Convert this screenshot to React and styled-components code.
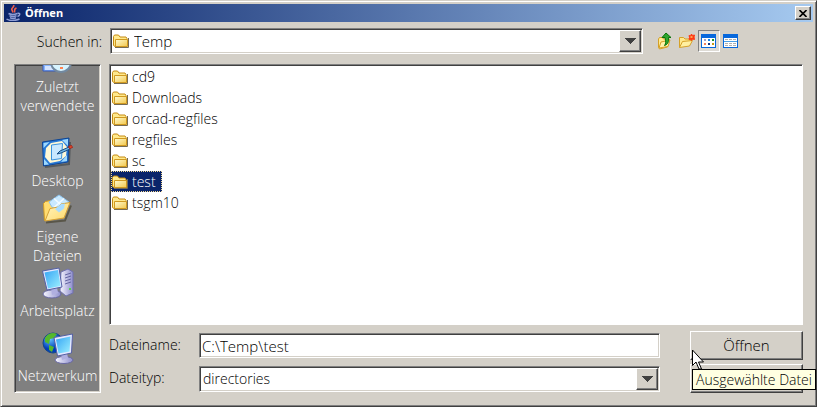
import React, {useState} from 'react';
import styled, {createGlobalStyle, css} from 'styled-components';

const face = '#d4d0c8';
const shadow = '#808080';
const darkShadow = '#404040';
const navy = '#0a246a';

const GlobalStyle = createGlobalStyle`
  * {
    box-sizing: border-box;
  }

  body {
    margin: 0;
    overflow: hidden;
    background: ${face};
  }

  body, button, input, select {
    color: #000;
    font-family: "Open Sans", "Noto Sans", sans-serif;
    font-size: 14px;
    font-weight: 300;
  }
`;

const sunken = css`
  border: 1px solid;
  border-color: ${shadow} #fff #fff ${shadow};
  box-shadow: inset 1px 1px ${darkShadow}, inset -1px -1px ${face};
`;

const raised = css`
  border: 1px solid;
  border-color: #fff ${darkShadow} ${darkShadow} #fff;
  box-shadow: inset -1px -1px ${shadow};
`;

const Dialog = styled.main`
  display: flex;
  flex-direction: column;
  min-height: 100vh;
  padding: 3px;
  overflow: hidden;
  background: ${face};
  border: 1px solid;
  border-color: ${face} ${darkShadow} ${darkShadow} ${face};
  box-shadow: inset 1px 1px #fff, inset -1px -1px ${shadow};
`;

const TitleBar = styled.header`
  display: flex;
  align-items: center;
  gap: 3px;
  height: 18px;
  padding: 0 2px;
  background: linear-gradient(to right, ${navy}, #a6caf0);
`;

const Title = styled.h1`
  flex: 1;
  margin: 0;
  color: #fff;
  font-family: "Noto Sans", sans-serif;
  font-size: 11px;
  font-weight: 700;
  line-height: 18px;
`;

const CloseButton = styled.button`
  ${raised}
  display: grid;
  place-items: center;
  width: 16px;
  height: 14px;
  padding: 0;
  background: ${face};
`;

const Toolbar = styled.div`
  display: flex;
  align-items: center;
  padding: 6px 71px 0 10px;
`;

const LookInLabel = styled.label`
  width: 96px;
  padding-right: 8px;
  text-align: right;
`;

const ToolButtons = styled.div`
  display: flex;
  margin-left: 11px;
`;

const ToolButton = styled.button`
  display: grid;
  place-items: center;
  width: 22px;
  height: 22px;
  padding: 0;
  background: ${({$pressed}) => ($pressed ? '#dedbd5' : 'transparent')};
  border: 1px solid;
  border-color: ${({$pressed}) => ($pressed ? `${shadow} #fff #fff ${shadow}` : 'transparent')};
`;

const ComboFrame = styled.div`
  ${sunken}
  position: relative;
  flex: 1;
  display: flex;
  align-items: center;
  height: 26px;
  padding: 2px;
  background: #fff;
`;

const ComboSelect = styled.select`
  flex: 1;
  min-width: 0;
  height: 20px;
  padding: 0 24px 0 ${({$withIcon}) => ($withIcon ? '5px' : '1px')};
  font-size: ${({$withIcon}) => ($withIcon ? '15px' : '14px')};
  line-height: 20px;
  background: transparent;
  border: 0;
  outline: 0;
  appearance: none;
`;

const ComboArrow = styled.span`
  ${raised}
  position: absolute;
  top: 1px;
  right: 1px;
  bottom: 1px;
  display: grid;
  place-items: center;
  width: 22px;
  background: ${face};
  pointer-events: none;
`;

const Body = styled.div`
  flex: 1;
  display: flex;
  gap: 8px;
  padding: 10px;
`;

const Places = styled.nav`
  ${sunken}
  display: flex;
  flex-direction: column;
  justify-content: flex-end;
  width: 87px;
  padding: 1px;
  overflow: hidden;
  background: ${shadow};
`;

const Place = styled.button`
  display: flex;
  flex-direction: column;
  align-items: center;
  justify-content: ${({$scrolled}) => ($scrolled ? 'flex-end' : 'center')};
  height: 65px;
  padding: 0 0 ${({$scrolled}) => ($scrolled ? '16px' : '0')};
  color: #fff;
  line-height: 19px;
  white-space: pre;
  background: none;
  border: 0;

  svg {
    flex: none;
    margin-bottom: 2px;
  }
`;

const Main = styled.div`
  flex: 1;
  display: flex;
  flex-direction: column;
  gap: 6px;
  min-width: 0;
`;

const FileList = styled.ul`
  flex: 1;
  margin: 0;
  padding: 1px;
  list-style: none;
  background: #fff;
  border: 1px solid;
  border-color: ${shadow} #fff #fff ${shadow};
  box-shadow: inset 1px 1px ${darkShadow};
`;

const FileItem = styled.li`
  display: flex;
  align-items: center;
  gap: 4px;
  width: fit-content;
  height: 21px;
  padding: 0 5px 0 0;
  color: ${({$selected}) => ($selected ? '#fff' : '#000')};
  line-height: 19px;
  background: ${({$selected}) => ($selected ? navy : 'transparent')};
  border: 1px dotted ${({$selected}) => ($selected ? '#f5db95' : 'transparent')};
  cursor: default;
`;

const Footer = styled.div`
  display: grid;
  grid-template-columns: 90px 1fr 113px;
  grid-template-rows: 29px 29px;
  row-gap: 4px;
  align-items: center;
`;

const FieldLabel = styled.label`
  padding-bottom: 2px;
`;

const FieldCell = styled.div`
  display: flex;
  margin-right: 30px;
`;

const FileNameInput = styled.input`
  ${sunken}
  width: 100%;
  min-width: 0;
  height: 25px;
  padding: 0 2px;
  font-size: 15px;
  background: #fff;
  border-radius: 0;
  outline: 0;
`;

const ActionCell = styled.div`
  position: relative;
`;

const ActionButton = styled.button`
  ${raised}
  width: 100%;
  height: 29px;
  padding: 0 0 2px;
  font-size: 15px;
  background: ${face};
`;

const Pointer = styled.svg`
  position: absolute;
  top: 18px;
  left: 2px;
  z-index: 1;
  pointer-events: none;
`;

const Tooltip = styled.div`
  position: absolute;
  top: 5px;
  left: 2px;
  z-index: 2;
  padding: 0 3px;
  line-height: 19px;
  white-space: nowrap;
  background: #ffffe1;
  border: 1px solid #000;
`;

const JavaIcon = () => (
  <svg
    height="16"
    viewBox="0 0 16 16"
    width="16"
  >
    <g
      fill="none"
      stroke="#f0604c"
      strokeWidth="1.6"
    >
      <path d="M7.500 0c1.500 2-3 3-1.500 5l1 2.500" />
      <path d="M10.500 3c-3 1-1.500 2.500-2 4.500" />
    </g>
    <g
      fill="none"
      stroke="#8f9ed6"
      strokeWidth="1.5"
    >
      <path d="M2.500 8.500c2 1 6 1 9 0M3.500 10.800c2 .8 5 .8 7 0M4 12.800c2 .8 4 .8 6 0" />
      <path d="M11.500 8.500c3-1 3 2 0 3M.5 14c3 2 9 2 13 0" />
    </g>
  </svg>
);

const FolderIcon = () => (
  <svg
    height="16"
    viewBox="0 0 16 16"
    width="16"
  >
    <defs>
      <linearGradient
        id="folder"
        x1="0"
        x2="1"
        y1="0"
        y2="1"
      >
        <stop
          offset="0"
          stopColor="#fffbd0"
        />
        <stop
          offset="1"
          stopColor="#f3c84d"
        />
      </linearGradient>
    </defs>
    <path
      d="M2 14.500h13.500V5"
      fill="none"
      stroke="#756b55"
    />
    <path
      d="M.5 12.500v-9l1-1.500h4l1.500 2h6l1 1.500v8h-12z"
      fill="#ffe98c"
      stroke="#c58b12"
    />
    <path
      d="M2.500 6.500h12v7h-12z"
      fill="url(#folder)"
      stroke="#d19a20"
    />
  </svg>
);

const UpIcon = () => (
  <svg
    height="18"
    viewBox="0 0 16 18"
    width="16"
  >
    <path
      d="M1.500 15.500V7l1-1.500h3l1 1.500h5l1 1-2 7-8 2z"
      fill="#ffeb91"
      stroke="#d5a128"
    />
    <path
      d="M2 16l2-6 9-2-2 6.500z"
      fill="#fff2a8"
      stroke="#d5a128"
    />
    <path
      d="M9 1l5 4.500h-2.500c.5 4-.5 7-4 8 1.500-2 1.500-4 .5-8H5z"
      fill="#2da52d"
      stroke="#087208"
    />
  </svg>
);

const NewFolderIcon = () => (
  <svg
    height="18"
    viewBox="0 0 16 18"
    width="16"
  >
    <path
      d="M.5 15.500V5.500h4l1.500 1.500h5.500v3"
      fill="#ffe98c"
      stroke="#d5a128"
    />
    <path
      d="M.5 15.500l3-6 10-1-3 5.500z"
      fill="#fff0a0"
      stroke="#d5a128"
    />
    <path
      d="M12.500 2l1 1.500 2-.5-.5 2 .5 2.500-2-.5-1 1.500-1-1.500-1.500.5.500-2-.5-2 1.500.5z"
      fill="#ff3a14"
      stroke="#ff3a14"
    />
    <path
      d="M11.500 4h2v2h-2z"
      fill="#ffa04c"
    />
  </svg>
);

const WindowGlyph = ({children}) => (
  <svg
    height="16"
    shapeRendering="crispEdges"
    viewBox="0 0 16 16"
    width="16"
  >
    <path
      d="M0 1h15v14H0z"
      fill="#0868dc"
    />
    <path
      d="M1 5h13v9H1z"
      fill="#fff"
    />
    {children}
  </svg>
);

const ListIcon = () => (
  <WindowGlyph>
    <path
      d="M3 6h2v2H3z"
      fill="#9c9cc8"
    />
    <path
      d="M7 6h2v2H7z"
      fill="#1684e8"
    />
    <path
      d="M11 6h2v2h-2z"
      fill="#169430"
    />
    <path
      d="M3 10h2v2H3z"
      fill="#f48259"
    />
    <path
      d="M7 10h2v2H7z"
      fill="#123584"
    />
    <path
      d="M11 10h2v2h-2z"
      fill="#c79a12"
    />
  </WindowGlyph>
);

const DetailsIcon = () => (
  <WindowGlyph>
    <path
      d="M2 6.500h11M2 10.500h11M2 12.500h11"
      stroke="#b0b0b0"
      strokeDasharray="3 1"
    />
    <path
      d="M1 8.500h13"
      stroke="#4b9fe5"
    />
  </WindowGlyph>
);

const PlaceGradients = () => (
  <defs>
    <linearGradient
      id="screen"
      x1="0"
      x2="1"
      y1="0"
      y2="1"
    >
      <stop
        offset="0"
        stopColor="#35a5f5"
      />
      <stop
        offset="1"
        stopColor="#9df0ff"
      />
    </linearGradient>
    <linearGradient
      id="metal"
      x1="0"
      x2="1"
    >
      <stop
        offset="0"
        stopColor="#f7f7ff"
      />
      <stop
        offset="1"
        stopColor="#8d8dcc"
      />
    </linearGradient>
    <linearGradient
      id="paper"
      x1="0"
      x2="1"
      y1="0"
      y2="1"
    >
      <stop
        offset="0"
        stopColor="#fff6c4"
      />
      <stop
        offset="1"
        stopColor="#ffd866"
      />
    </linearGradient>
    <radialGradient
      cx=".35"
      cy=".3"
      id="globe"
    >
      <stop
        offset="0"
        stopColor="#66c6ff"
      />
      <stop
        offset="1"
        stopColor="#003db8"
      />
    </radialGradient>
  </defs>
);

const PlaceIcon = ({children}) => (
  <svg
    height="32"
    viewBox="0 0 32 32"
    width="32"
  >
    <PlaceGradients />
    {children}
  </svg>
);

const RecentIcon = () => (
  <PlaceIcon>
    <path
      d="M1 8h19v20H1z"
      fill="#86b5ff"
      stroke="#3759b8"
    />
    <path
      d="M3 23h8v4H3z"
      fill="#d5e4ff"
    />
    <circle
      cx="19"
      cy="19"
      fill="#d8f4ff"
      r="10"
      stroke="#7289a0"
      strokeWidth="2"
    />
    <path
      d="M19 12v9l4-3"
      fill="none"
      stroke="#345b83"
    />
    <path
      d="M18 24h3v2h-3z"
      fill="#ff8352"
    />
  </PlaceIcon>
);

const DesktopIcon = () => (
  <PlaceIcon>
    <path
      d="M3 30l24-3 1-22"
      fill="none"
      stroke="#55595c"
      strokeWidth="2"
    />
    <path
      d="M.5 5L27 1l-1 24-24.500 4z"
      fill="#2679d7"
      stroke="#0d4596"
    />
    <path
      d="M1.500 6l6-1-6 6zM20 3l6-1v7zM2 22l5 5.500-5 .5zM25 18v6l-6 1z"
      fill="#9ed9ff"
    />
    <path
      d="M9 6l11-2 5 6-1 9-6 5-10 2-5-6 1-9z"
      fill="#fff8d6"
    />
    <path
      d="M9.500 8l11-1.500-1 15-10 1.500z"
      fill="#c8e8ff"
      stroke="#3b94df"
    />
    <path
      d="M15 17l3-3 9-4 1 2-9 4z"
      fill="#72b7e8"
      stroke="#174c82"
    />
    <path
      d="M26.500 9.500l3-1 1 2-3 1z"
      fill="#f0552d"
      stroke="#a52119"
    />
  </PlaceIcon>
);

const DocumentsIcon = () => (
  <PlaceIcon>
    <path
      d="M4 29.500l19-2 6-15"
      fill="none"
      stroke="#595649"
      strokeWidth="2"
    />
    <path
      d="M2.500 27.500l-1-17 2-2 5-1 3 4 11-1v14z"
      fill="#ffdc70"
      stroke="#d19b24"
    />
    <path
      d="M7 9l10-7 10 7-9 11-8-6z"
      fill="#c9e9ff"
      stroke="#8cc4f0"
    />
    <path
      d="M12 5.500l10 9M22 5.500l-10 9"
      stroke="#f2faff"
      strokeWidth="1.5"
    />
    <path
      d="M3 28l5-12.500 8-1.500 3-3 9-1.500-6 15.500z"
      fill="url(#paper)"
      stroke="#d4a136"
    />
    <path
      d="M13 16l6-5 4-.5-1 5-5 4z"
      fill="#a9dcff"
    />
  </PlaceIcon>
);

const ComputerIcon = () => (
  <PlaceIcon>
    <path
      d="M19 5l7-3 5 3v21l-7 3-6-5z"
      fill="url(#metal)"
      stroke="#7071ae"
    />
    <path
      d="M23 8l6-2M23 11l6-2M23 14l6-2M23 17l6-2"
      stroke="#6566a2"
    />
    <path
      d="M27 21h2v2h-2z"
      fill="#58d34b"
    />
    <ellipse
      cx="10"
      cy="27"
      fill="url(#metal)"
      rx="9"
      ry="4"
      stroke="#6868a3"
    />
    <path
      d="M9 21l6-1 1 6-6 2z"
      fill="#b0afe0"
    />
    <path
      d="M.5 4L17 1l3 19-15 3z"
      fill="#e4e7ff"
      stroke="#5360a5"
    />
    <path
      d="M2.500 5.500L16 3l2.500 16-12.500 2.500z"
      fill="url(#screen)"
    />
  </PlaceIcon>
);

const NetworkIcon = () => (
  <PlaceIcon>
    <circle
      cx="11"
      cy="11"
      fill="url(#globe)"
      r="10"
      stroke="#164889"
    />
    <path
      d="M3 6c3-5 8-6 12-4l-3 4-4 1-1 5-4-2zM7 13l5 2-2 5-3-2z"
      fill="#55b82c"
    />
    <ellipse
      cx="22"
      cy="28"
      fill="url(#metal)"
      rx="9"
      ry="3.5"
      stroke="#6868a3"
    />
    <path
      d="M19 22l6-1 1 5-6 2z"
      fill="#b0afe0"
    />
    <path
      d="M12 5.500L30.500 2l-1 19-14 3z"
      fill="#e4e7ff"
      stroke="#5360a5"
    />
    <path
      d="M14 7.500L28.500 4.500l-1 15-11 2z"
      fill="url(#screen)"
    />
  </PlaceIcon>
);

const Triangle = () => (
  <svg
    height="6"
    shapeRendering="crispEdges"
    viewBox="0 0 12 6"
    width="12"
  >
    <path
      d="M0 0h12L6 6z"
      fill={darkShadow}
    />
  </svg>
);

const places = [
  {label: 'Zuletzt\nverwendete', Icon: RecentIcon, scrolled: true},
  {label: 'Desktop', Icon: DesktopIcon},
  {label: 'Eigene\nDateien', Icon: DocumentsIcon},
  {label: 'Arbeitsplatz', Icon: ComputerIcon},
  {label: 'Netzwerkum', Icon: NetworkIcon},
];

const files = ['cd9', 'Downloads', 'orcad-regfiles', 'regfiles', 'sc', 'test', 'tsgm10'];

const Combo = ({id, value, icon}) => (
  <ComboFrame>
    {icon}
    <ComboSelect
      $withIcon={Boolean(icon)}
      id={id}
    >
      <option>{value}</option>
    </ComboSelect>
    <ComboArrow>
      <Triangle />
    </ComboArrow>
  </ComboFrame>
);

const App = () => {
  const [selected, setSelected] = useState('test');
  const [fileName, setFileName] = useState('C:\\Temp\\test');

  const selectFile = (name) => {
    setSelected(name);
    setFileName(`C:\\Temp\\${name}`);
  };

  return (
    <Dialog>
      <GlobalStyle />
      <TitleBar>
        <JavaIcon />
        <Title>Öffnen</Title>
        <CloseButton aria-label="Schließen">
          <svg
            height="7"
            viewBox="0 0 8 7"
            width="8"
          >
            <path
              d="M.5 0l7 7M7.500 0l-7 7"
              stroke="#000"
              strokeWidth="1.6"
            />
          </svg>
        </CloseButton>
      </TitleBar>
      <Toolbar>
        <LookInLabel htmlFor="look-in">Suchen in:</LookInLabel>
        <Combo
          icon={<FolderIcon />}
          id="look-in"
          value="Temp"
        />
        <ToolButtons>
          <ToolButton aria-label="Eine Ebene höher"><UpIcon /></ToolButton>
          <ToolButton aria-label="Neuer Ordner"><NewFolderIcon /></ToolButton>
          <ToolButton
            $pressed
            aria-label="Liste"
            aria-pressed="true"
          >
            <ListIcon />
          </ToolButton>
          <ToolButton aria-label="Details"><DetailsIcon /></ToolButton>
        </ToolButtons>
      </Toolbar>
      <Body>
        <Places>
          {
            places.map(({label, Icon, scrolled}) =>
              (
                <Place
                  $scrolled={scrolled}
                  key={label}
                >
                  <Icon />
                  <span>{label}</span>
                </Place>
              )
            )
          }
        </Places>
        <Main>
          <FileList role="listbox">
            {
              files.map((name) =>
                (
                  <FileItem
                    $selected={name === selected}
                    aria-selected={name === selected}
                    key={name}
                    onClick={() => selectFile(name)}
                    role="option"
                  >
                    <FolderIcon />
                    {name}
                  </FileItem>
                )
              )
            }
          </FileList>
          <Footer>
            <FieldLabel htmlFor="file-name">Dateiname:</FieldLabel>
            <FieldCell>
              <FileNameInput
                id="file-name"
                onChange={({currentTarget: {value}}) => setFileName(value)}
                value={fileName}
              />
            </FieldCell>
            <ActionCell>
              <ActionButton>Öffnen</ActionButton>
              <Pointer
                height="21"
                viewBox="0 0 13 21"
                width="13"
              >
                <path
                  d="M.5 1v15.500l3.500-3.500 3 7h2.500l-3-7h5z"
                  fill="#fff"
                  stroke="#000"
                />
              </Pointer>
            </ActionCell>
            <FieldLabel htmlFor="file-type">Dateityp:</FieldLabel>
            <FieldCell>
              <Combo
                id="file-type"
                value="directories"
              />
            </FieldCell>
            <ActionCell>
              <ActionButton aria-label="Abbrechen" />
              <Tooltip role="tooltip">Ausgewählte Datei</Tooltip>
            </ActionCell>
          </Footer>
        </Main>
      </Body>
    </Dialog>
  );
};

export default App;
